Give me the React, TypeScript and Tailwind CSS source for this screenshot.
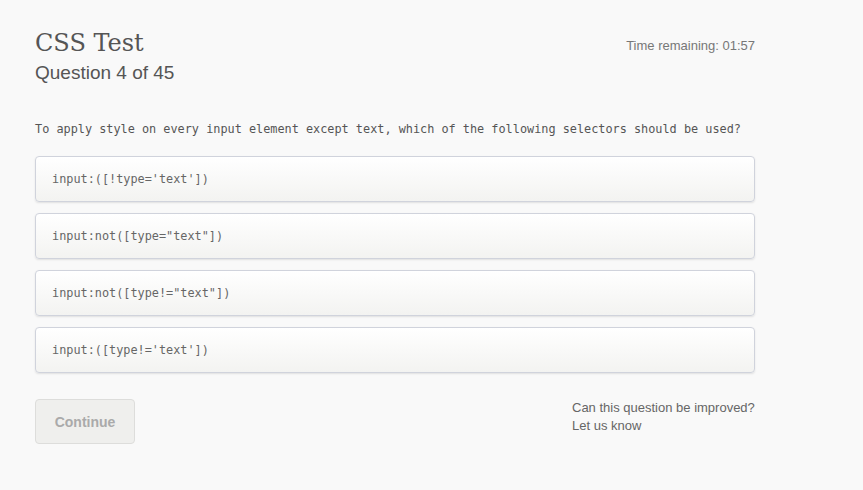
// Quiz question screen: header with timer, prompt, answer cards, footer actions.

const options = [
  "input:([!type='text'])",
  'input:not([type="text"])',
  'input:not([type!="text"])',
  "input:([type!='text'])",
];

export default function App() {
  return (
    <div className="min-h-[490px] w-full bg-[#f9f9f9] font-['Liberation_Sans',Arial,sans-serif]">
      <div className="w-[720px] ml-[35px] pt-[27px]">
        {/* Header */}
        <div className="flex items-start justify-between">
          <div>
            <h1 className="font-['DejaVu_Serif',serif] text-[24px] leading-[32px] text-[#555]">
              CSS Test
            </h1>
            <div className="text-[19px] leading-[22px] text-[#555] mt-[3px]">
              Question 4 of 45
            </div>
          </div>
          <div className="text-[13px] text-[#777] mt-[9px]">Time remaining: 01:57</div>
        </div>

        {/* Prompt */}
        <p className="mt-[37px] font-['DejaVu_Sans_Mono',monospace] text-[11.85px] leading-[16px] text-[#555] whitespace-nowrap">
          To apply style on every input element except text, which of the following selectors should be used?
        </p>

        {/* Answers */}
        <div className="mt-[19px] flex flex-col gap-[11px]">
          {options.map((o) => (
            <div
              key={o}
              className="h-[46px] flex items-center pt-[2px] px-[16px] rounded-[4px] border border-[#d0d3dc] bg-gradient-to-b from-white to-[#f3f3f1] shadow-[0_1px_2px_rgba(0,0,0,0.1)] font-['DejaVu_Sans_Mono',monospace] text-[11.85px] text-[#666]"
            >
              {o}
            </div>
          ))}
        </div>

        {/* Footer */}
        <div className="mt-[26px] flex items-start justify-between">
          <button className="w-[100px] h-[45px] pt-[2px] rounded-[4px] border border-[#dddddb] bg-[#efefed] text-[14px] font-bold text-[#aaa]">
            Continue
          </button>
          <div className="w-[183px] text-[13px] leading-[18px] text-[#666] whitespace-nowrap">
            <div>Can this question be improved?</div>
            <div>Let us know</div>
          </div>
        </div>
      </div>
    </div>
  );
}
